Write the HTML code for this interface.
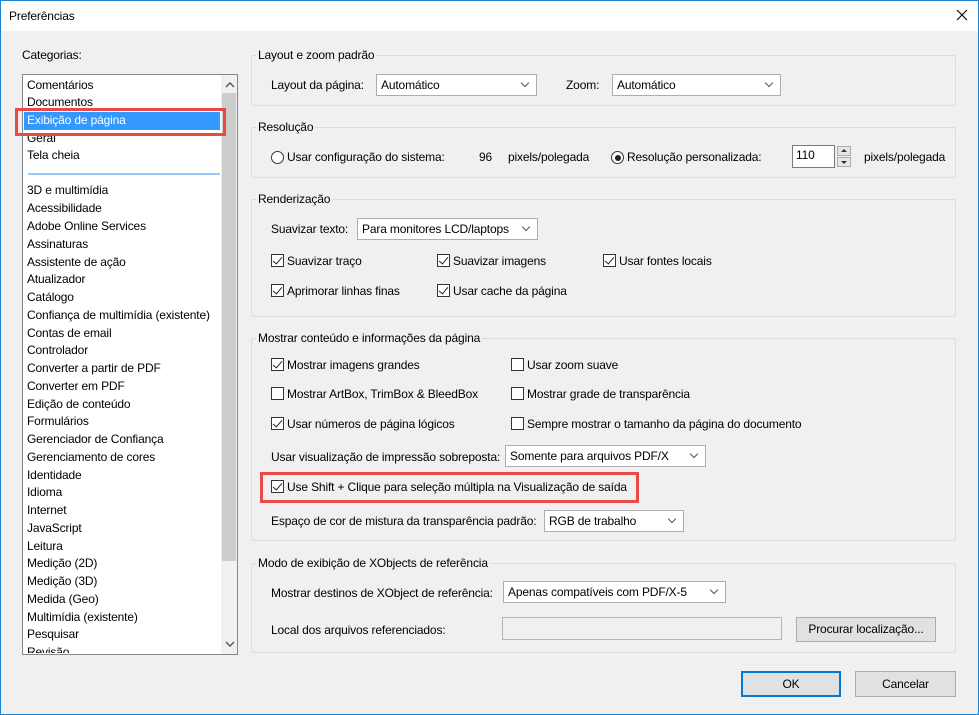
<!DOCTYPE html>
<html><head><meta charset="utf-8"><style>
*{box-sizing:border-box;margin:0;padding:0}
body{width:979px;height:715px;overflow:hidden;background:#f0f0f0;font-family:"Liberation Sans",sans-serif;font-size:12px;letter-spacing:-0.15px;color:#000;position:relative}
.a{position:absolute;white-space:nowrap}
.win{position:absolute;left:0;top:0;width:979px;height:715px;border:1px solid #1883d7}
.title{position:absolute;left:1px;top:1px;width:977px;height:30px;background:#fff}
.grp{position:absolute;border:1px solid #dcdcdc;border-radius:2px}
.gt{position:absolute;background:#f0f0f0;padding:0 2px;top:-8px;left:4px;white-space:nowrap}
.sel{position:absolute;background:#fff;border:1px solid #adadad;height:22px;padding:3px 4px}
.sel:after{content:"";position:absolute;right:8px;top:5px;width:5px;height:5px;border-right:1px solid #555;border-bottom:1px solid #555;transform:rotate(45deg)}
.cb{position:absolute;width:13px;height:13px;border:1px solid #333;background:#fff}
.cb.on:after{content:"";position:absolute;left:3px;top:0px;width:4px;height:8px;border-right:1.5px solid #222;border-bottom:1.5px solid #222;transform:rotate(40deg)}
.rd{position:absolute;width:13px;height:13px;border:1px solid #333;border-radius:50%;background:#fff}
.rd.on:after{content:"";position:absolute;left:2.5px;top:2.5px;width:6px;height:6px;border-radius:50%;background:#222}
.btn{position:absolute;background:#e1e1e1;border:1px solid #adadad;text-align:center;line-height:22px}
.li{position:absolute;left:27px;white-space:nowrap}
</style></head><body>
<div class="win"></div>
<div class="title"></div>
<div class="a" style="left:9px;top:9px">Preferências</div>
<svg class="a" style="left:956px;top:9px" width="12" height="12"><path d="M1 1L11 11M11 1L1 11" stroke="#000" stroke-width="1.1"/></svg>

<div class="a" style="left:22px;top:48px">Categorias:</div>
<div class="a" style="left:22px;top:74px;width:216px;height:581px;background:#fff;border:1px solid #828790;overflow:hidden">
 <div class="a" style="left:198px;top:0;width:17px;height:579px;background:#f0f0f0"></div>
 <div class="a" style="left:199px;top:18px;width:14px;height:468px;background:#cdcdcd"></div>
 <svg class="a" style="left:202px;top:7px" width="10" height="6"><path d="M1 5L5 1L9 5" stroke="#555" fill="none" stroke-width="1.4"/></svg>
 <svg class="a" style="left:202px;top:566px" width="10" height="6"><path d="M1 1L5 5L9 1" stroke="#555" fill="none" stroke-width="1.4"/></svg>
 <div class="a" style="left:1px;top:37px;width:196px;height:18px;background:#3399ff"></div>
 <div class="a" style="left:5px;top:98px;width:192px;height:2px;background:#99c9f5"></div>
</div>
<div class="a" style="left:15px;top:108px;width:211px;height:28px;border:3px solid #e84a47"></div>
<div style="position:absolute;left:0;top:0;line-height:14px">
<div class="li" style="top:78px">Comentários</div>
<div class="li" style="top:95px">Documentos</div>
<div class="li" style="top:113px;color:#fff">Exibição de página</div>
<div class="li" style="top:136px;height:6px;overflow:hidden"><span style="position:relative;top:-5px">Geral</span></div>
<div class="li" style="top:148px">Tela cheia</div>
<div class="li" style="top:183px">3D e multimídia</div>
<div class="li" style="top:201px">Acessibilidade</div>
<div class="li" style="top:219px">Adobe Online Services</div>
<div class="li" style="top:237px">Assinaturas</div>
<div class="li" style="top:255px">Assistente de ação</div>
<div class="li" style="top:272px">Atualizador</div>
<div class="li" style="top:290px">Catálogo</div>
<div class="li" style="top:308px">Confiança de multimídia (existente)</div>
<div class="li" style="top:326px">Contas de email</div>
<div class="li" style="top:343px">Controlador</div>
<div class="li" style="top:361px">Converter a partir de PDF</div>
<div class="li" style="top:379px">Converter em PDF</div>
<div class="li" style="top:397px">Edição de conteúdo</div>
<div class="li" style="top:414px">Formulários</div>
<div class="li" style="top:432px">Gerenciador de Confiança</div>
<div class="li" style="top:450px">Gerenciamento de cores</div>
<div class="li" style="top:468px">Identidade</div>
<div class="li" style="top:485px">Idioma</div>
<div class="li" style="top:503px">Internet</div>
<div class="li" style="top:521px">JavaScript</div>
<div class="li" style="top:539px">Leitura</div>
<div class="li" style="top:556px">Medição (2D)</div>
<div class="li" style="top:574px">Medição (3D)</div>
<div class="li" style="top:592px">Medida (Geo)</div>
<div class="li" style="top:610px">Multimídia (existente)</div>
<div class="li" style="top:627px">Pesquisar</div>
<div class="li" style="top:645px;height:8px;overflow:hidden">Revisão</div>
</div>

<div class="grp" style="left:251px;top:55px;width:705px;height:51px"><div class="gt">Layout e zoom padrão</div></div>
<div class="a" style="left:271px;top:78px">Layout da página:</div>
<div class="sel" style="left:376px;top:74px;width:161px">Automático</div>
<div class="a" style="left:566px;top:78px">Zoom:</div>
<div class="sel" style="left:612px;top:74px;width:169px">Automático</div>

<div class="grp" style="left:251px;top:127px;width:705px;height:51px"><div class="gt">Resolução</div></div>
<div class="rd" style="left:271px;top:151px"></div>
<div class="a" style="left:287px;top:150px">Usar configuração do sistema:</div>
<div class="a" style="left:479px;top:150px">96</div>
<div class="a" style="left:508px;top:150px">pixels/polegada</div>
<div class="rd on" style="left:611px;top:151px"></div>
<div class="a" style="left:627px;top:150px">Resolução personalizada:</div>
<div class="a" style="left:792px;top:145px;width:43px;height:23px;background:#fff;border:1px solid #7a7a7a;padding:2px 3px">110</div>
<div class="a" style="left:837px;top:146px;width:14px;height:10px;background:#e5e5e5;border:1px solid #adadad"></div>
<div class="a" style="left:837px;top:157px;width:14px;height:10px;background:#e5e5e5;border:1px solid #adadad"></div>
<svg class="a" style="left:840px;top:148px" width="8" height="18"><path d="M1 4L4 1L7 4Z M1 13L4 16L7 13Z" fill="#333"/></svg>
<div class="a" style="left:864px;top:150px">pixels/polegada</div>

<div class="grp" style="left:251px;top:199px;width:705px;height:118px"><div class="gt">Renderização</div></div>
<div class="a" style="left:271px;top:222px">Suavizar texto:</div>
<div class="sel" style="left:357px;top:218px;width:181px">Para monitores LCD/laptops</div>
<div class="cb on" style="left:271px;top:254px"></div><div class="a" style="left:287px;top:254px">Suavizar traço</div>
<div class="cb on" style="left:437px;top:254px"></div><div class="a" style="left:453px;top:254px">Suavizar imagens</div>
<div class="cb on" style="left:603px;top:254px"></div><div class="a" style="left:619px;top:254px">Usar fontes locais</div>
<div class="cb on" style="left:271px;top:284px"></div><div class="a" style="left:287px;top:284px">Aprimorar linhas finas</div>
<div class="cb on" style="left:437px;top:284px"></div><div class="a" style="left:453px;top:284px">Usar cache da página</div>

<div class="grp" style="left:251px;top:338px;width:705px;height:203px"><div class="gt">Mostrar conteúdo e informações da página</div></div>
<div class="cb on" style="left:271px;top:358px"></div><div class="a" style="left:287px;top:358px">Mostrar imagens grandes</div>
<div class="cb" style="left:511px;top:358px"></div><div class="a" style="left:527px;top:358px">Usar zoom suave</div>
<div class="cb" style="left:271px;top:387px"></div><div class="a" style="left:287px;top:387px">Mostrar ArtBox, TrimBox &amp; BleedBox</div>
<div class="cb" style="left:511px;top:387px"></div><div class="a" style="left:527px;top:387px">Mostrar grade de transparência</div>
<div class="cb on" style="left:271px;top:417px"></div><div class="a" style="left:287px;top:417px">Usar números de página lógicos</div>
<div class="cb" style="left:511px;top:417px"></div><div class="a" style="left:527px;top:417px">Sempre mostrar o tamanho da página do documento</div>
<div class="a" style="left:271px;top:450px">Usar visualização de impressão sobreposta:</div>
<div class="sel" style="left:505px;top:445px;width:201px">Somente para arquivos PDF/X</div>
<div class="a" style="left:260px;top:472px;width:379px;height:31px;border:3px solid #e84a47"></div>
<div class="cb on" style="left:271px;top:480px"></div><div class="a" style="left:287px;top:480px">Use Shift + Clique para seleção múltipla na Visualização de saída</div>
<div class="a" style="left:271px;top:514px">Espaço de cor de mistura da transparência padrão:</div>
<div class="sel" style="left:544px;top:510px;width:140px">RGB de trabalho</div>

<div class="grp" style="left:251px;top:563px;width:705px;height:90px"><div class="gt">Modo de exibição de XObjects de referência</div></div>
<div class="a" style="left:271px;top:586px">Mostrar destinos de XObject de referência:</div>
<div class="sel" style="left:503px;top:581px;width:223px">Apenas compatíveis com PDF/X-5</div>
<div class="a" style="left:271px;top:623px">Local dos arquivos referenciados:</div>
<div class="a" style="left:502px;top:617px;width:280px;height:23px;background:#f0f0f0;border:1px solid #b5b5b5"></div>
<div class="btn" style="left:796px;top:617px;width:140px;height:25px">Procurar localização...</div>

<div class="btn" style="left:741px;top:671px;width:100px;height:26px;border:2px solid #0078d7;line-height:22px">OK</div>
<div class="btn" style="left:855px;top:671px;width:101px;height:26px;line-height:24px">Cancelar</div>
</body></html>
